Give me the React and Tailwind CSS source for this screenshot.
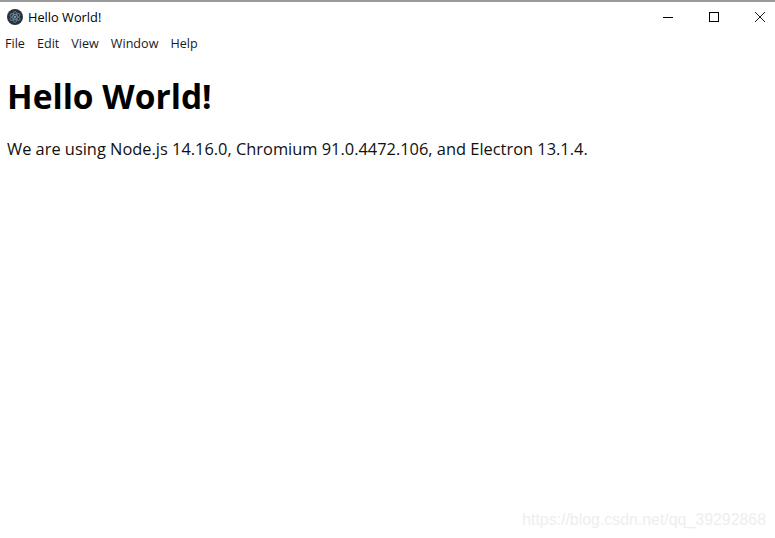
const ElectronIcon = () => (
  <svg width="16" height="16" viewBox="0 0 16 16" fill="none" className="shrink-0">
    <circle cx="8" cy="8" r="8" fill="#2b2e3b" />
    <g stroke="#9feaf9" strokeWidth="0.7" opacity="0.6">
      <ellipse cx="8" cy="8" rx="5.6" ry="2.2" transform="rotate(30 8 8)" />
      <ellipse cx="8" cy="8" rx="5.6" ry="2.2" transform="rotate(90 8 8)" />
      <ellipse cx="8" cy="8" rx="5.6" ry="2.2" transform="rotate(150 8 8)" />
    </g>
    <circle cx="8" cy="8" r="1" fill="#9feaf9" opacity="0.8" />
  </svg>
);

const WindowButtons = () => (
  <div className="mr-[-8px] flex items-center">
    <button className="flex h-[30px] w-[46px] items-center justify-center">
      <svg width="10" height="10" viewBox="0 0 10 10"><path d="M0 5.5h10" stroke="#000" /></svg>
    </button>
    <button className="flex h-[30px] w-[46px] items-center justify-center">
      <svg width="10" height="10" viewBox="0 0 10 10" fill="none"><rect x="0.5" y="0.5" width="9" height="9" stroke="#000" /></svg>
    </button>
    <button className="flex h-[30px] w-[46px] items-center justify-center">
      <svg width="10" height="10" viewBox="0 0 10 10" fill="none"><path d="M0 0l10 10M10 0L0 10" stroke="#000" strokeWidth="0.9" /></svg>
    </button>
  </div>
);

const menus = ['File', 'Edit', 'View', 'Window', 'Help'];

export default function App() {
  return (
    <div className="relative flex h-[538px] w-[775px] flex-col overflow-hidden bg-white font-['Open_Sans','Noto_Sans',sans-serif] text-black">
      <div className="h-[2px] bg-[#9a9a9a]" />

      {/* Title bar */}
      <div className="flex h-[30px] items-center justify-between pl-[7px]">
        <div className="flex items-center gap-[5px]">
          <ElectronIcon />
          <span className="text-[12.8px] leading-none">Hello World!</span>
        </div>
        <WindowButtons />
      </div>

      {/* Menu bar */}
      <div className="flex h-[25px] items-center gap-[12px] pl-[5px] text-[12.6px] text-[#1a1a1a]">
        {menus.map((m) => (
          <span key={m}>{m}</span>
        ))}
      </div>

      <div className="px-[7px]">
        <h1 className="mt-[17px] text-[33.5px] leading-[44px] font-bold">Hello World!</h1>
        <p className="mt-[20px] text-[16.4px] leading-[22px] text-[#111]">
          We are using Node.js 14.16.0, Chromium 91.0.4472.106, and Electron 13.1.4.
        </p>
      </div>

      {/* Watermark */}
      <span className="absolute right-[9px] bottom-[8px] font-['Liberation_Sans',sans-serif] text-[15.9px] leading-[20px] text-[#eeeeee]">
        https://blog.csdn.net/qq_39292868
      </span>
    </div>
  );
}
